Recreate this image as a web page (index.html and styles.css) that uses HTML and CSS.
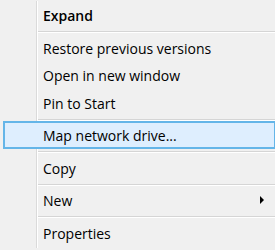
FILE: index.html
```html
<!DOCTYPE html>
<html lang="en">
<head>
    <meta charset="UTF-8">
    <title>Context menu</title>
    <link rel="stylesheet" href="styles.css">
</head>
<body>

<div class="menu">
    <div class="item bold">Expand</div>
    <div class="sep"></div>
    <div class="item">Restore previous versions</div>
    <div class="item">Open in new window</div>
    <div class="item">Pin to Start</div>
    <div class="sep"></div>
    <div class="item active">Map network drive...</div>
    <div class="sep"></div>
    <div class="item">Copy</div>
    <div class="sep"></div>
    <div class="item has-sub">New <span class="arrow"></span></div>
    <div class="sep"></div>
    <div class="item">Properties</div>
</div>

</body>
</html>
```

FILE: styles.css
```css
* {
    margin: 0;
    padding: 0;
    box-sizing: border-box;
}

body {
    font-family: 'Open Sans', sans-serif;
    background-color: #f0f0f0;
    color: #000;
    width: 275px;
    height: 250px;
    overflow: hidden;
}

.menu {
    width: 273px;
    margin-left: 3px;
    padding: 1px 0 4px;
    position: relative;
}

/* icon gutter line */
.menu::before {
    content: '';
    position: absolute;
    left: 33px;
    top: 1px;
    bottom: 2px;
    width: 1px;
    background-color: #dadada;
    box-shadow: 1px 0 0 #fff;
}

.item {
    height: 27.5px;
    line-height: 27px;
    padding-left: 39px;
    font-size: 14px;
    position: relative;
    border: 1px solid transparent;
}

.item.bold {
    font-weight: 600;
}

.item.active {
    background-color: #deeefe;
    border: 2px solid #64b5e8;
    padding-left: 38px;
    line-height: 25px;
    z-index: 1;
}

.sep {
    height: 1px;
    margin: 2.5px 0 1.5px 33px;
    background-color: #d5d5d5;
    box-shadow: 0 1px 0 #fff;
}

.arrow {
    position: absolute;
    right: 11px;
    top: 9px;
    width: 0;
    height: 0;
    border-top: 4px solid transparent;
    border-bottom: 4px solid transparent;
    border-left: 4px solid #000;
}
```
